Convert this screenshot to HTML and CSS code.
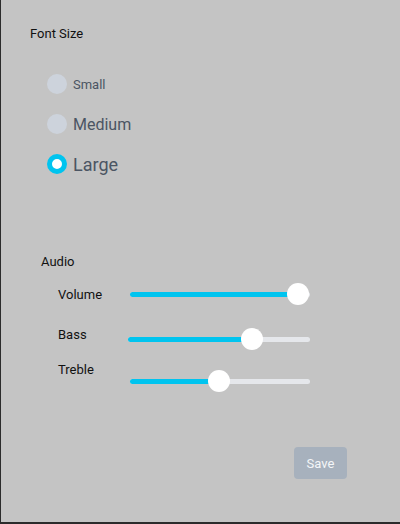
FILE: index.html
```html
<!DOCTYPE html>
<html>
<head>
<meta charset="utf-8">
<link rel="stylesheet" href="styles.css">
</head>
<body>
<div class="frame">
  <div class="title">Font Size</div>
  <div class="radios">
    <label class="radio"><span class="dot"></span><span class="rl rl-small">Small</span></label>
    <label class="radio"><span class="dot"></span><span class="rl rl-medium">Medium</span></label>
    <label class="radio"><span class="dot checked"></span><span class="rl rl-large">Large</span></label>
  </div>
  <div class="audio">
    <div class="audio-title">Audio</div>
    <div class="row row-volume">
      <div class="lbl">Volume</div>
      <div class="slider s-volume"><div class="fill" style="width:168px"></div><div class="thumb" style="left:157px"></div></div>
    </div>
    <div class="row row-bass">
      <div class="lbl">Bass</div>
      <div class="slider s-bass"><div class="fill" style="width:124px"></div><div class="thumb" style="left:113px"></div></div>
    </div>
    <div class="row row-treble">
      <div class="lbl">Treble</div>
      <div class="slider s-treble"><div class="fill" style="width:89px"></div><div class="thumb" style="left:78px"></div></div>
    </div>
  </div>
  <div class="footer"><button class="save">Save</button></div>
</div>
</body>
</html>
```
FILE: styles.css
```css
html, body { margin: 0; padding: 0; }
body { background: #c4c4c4; font-family: Roboto, "Noto Sans", sans-serif; }
.frame {
  width: 400px; height: 524px; box-sizing: border-box;
  border-left: 1px solid #2b2b2b; border-bottom: 2px solid #2b2b2b;
  padding: 24px 0 0 29px;
}
.title { font-size: 13px; line-height: 18px; padding-top: 1px; color: #111; }
.radios { margin-top: 31px; padding-left: 17px; display: flex; flex-direction: column; gap: 20px; }
.radio { display: flex; align-items: center; height: 20px; gap: 6px; }
.dot { width: 20px; height: 20px; border-radius: 50%; background: #cdd3dc; box-sizing: border-box; }
.dot.checked { background: #fff; border: 5px solid #00c4ef; }
.rl { color: #4b5563; line-height: 20px; padding-top: 1px; }
.rl-small { font-size: 13px; }
.rl-medium { font-size: 16px; }
.rl-large { font-size: 18px; }
.audio { margin-top: 78px; padding-left: 11px; }
.audio-title { font-size: 13px; line-height: 18px; padding-top: 1px; color: #111; }
.row { display: flex; align-items: flex-start; padding-left: 17px; }
.lbl { width: 72px; font-size: 13px; line-height: 18px; padding-top: 1px; color: #111; }
.row-volume { margin-top: 14px; }
.row-bass { margin-top: 20px; }
.row-treble { margin-top: 10px; }
.slider { position: relative; width: 180px; height: 22px; }
.slider::before { content: ""; position: absolute; left: 0; right: 0; top: 8.5px; height: 5px; border-radius: 3px; background: #e5e7eb; }
.fill { position: absolute; left: 0; top: 8.5px; height: 5px; border-radius: 3px; background: #00c4ef; }
.thumb { position: absolute; top: 0; width: 22px; height: 22px; border-radius: 50%; background: #fff; }
.s-volume { margin-top: -2px; }
.s-bass { margin-top: 3px; margin-left: -2px; width: 182px; }
.s-treble { margin-top: 10px; }
.footer { display: flex; justify-content: flex-end; padding-right: 53px; margin-top: 55px; }
.save {
  width: 53px; height: 32px; border: none; border-radius: 4px;
  background: #a7b1bd; color: #f4f6f8; font-family: Roboto, sans-serif; font-size: 13px; padding: 0;
}
```
